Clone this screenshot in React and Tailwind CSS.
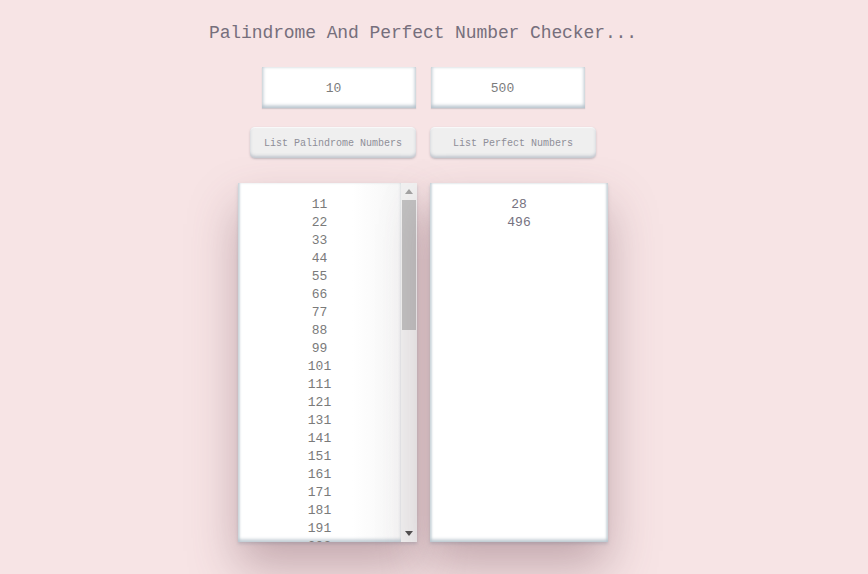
import React from "react";

const palins = [];
for (let i = 10; i <= 500; i++) {
  const s = String(i);
  if (s === s.split("").reverse().join("")) palins.push(i);
}
const perfects = [28, 496];

export default function App() {
  return (
    <div className="min-h-[574px] w-[868px] overflow-hidden bg-[#f7e4e5] font-['Liberation_Mono',monospace]">
      <div className="flex w-[846px] flex-col items-center pt-[21px]">
        <h1 className="h-[24px] text-[18px] leading-[24px] tracking-[-0.1px] text-[#766f7c]">
          Palindrome And Perfect Number Checker...
        </h1>
        <div className="mt-[22px] flex gap-[15px]">
          {["10", "500"].map((v) => (
            <div
              key={v}
              className="flex h-[41px] w-[154px] items-center justify-center bg-white pr-[10px] pt-[2px] text-[13px] text-[#7c7c7c] shadow-[inset_0_-3px_3px_rgba(160,176,190,0.55),inset_2px_0_3px_rgba(175,190,200,0.45),inset_-2px_0_3px_rgba(175,190,200,0.45),0_1px_1px_rgba(150,160,170,0.4)]"
            >
              {v}
            </div>
          ))}
        </div>
        <div className="mt-[19px] flex gap-[14px]">
          {["List Palindrome Numbers", "List Perfect Numbers"].map((t) => (
            <div
              key={t}
              className="flex h-[31px] w-[166px] items-center justify-center rounded-[5px] bg-[#efefef] pt-[2px] text-[10px] text-[#8e8e98] shadow-[inset_0_-2px_3px_rgba(150,160,175,0.5),inset_0_1px_1px_rgba(255,255,255,0.8),0_1px_2px_rgba(140,140,150,0.5)]"
            >
              {t}
            </div>
          ))}
        </div>
        <div className="mt-[25px] flex gap-[13px]">
          <div className="flex h-[359px] w-[179px] shadow-[0_25px_45px_rgba(110,70,85,0.38),0_2px_3px_rgba(150,160,175,0.4)]">
            <div className="w-[163px] overflow-hidden bg-[linear-gradient(to_right,#ffffff_70%,#f6f6f6)] pt-[13px] text-center text-[13px] leading-[18px] text-[#7a7a7a] shadow-[inset_2px_0_2px_rgba(175,190,200,0.5),inset_0_-3px_3px_rgba(160,176,190,0.55)]">
              {palins.map((n) => (
                <div key={n}>{n}</div>
              ))}
            </div>
            <div className="flex w-[16px] flex-col bg-[#f1f1f1]">
              <div className="flex h-[17px] items-center justify-center">
                <svg width="8" height="5" viewBox="0 0 8 5">
                  <path d="M4 0 L8 5 L0 5 Z" fill="#a3a3a3" />
                </svg>
              </div>
              <div className="mx-[1px] h-[130px] bg-[#c1c1c1]" />
              <div className="flex-1" />
              <div className="flex h-[17px] items-center justify-center">
                <svg width="8" height="5" viewBox="0 0 8 5">
                  <path d="M0 0 L8 0 L4 5 Z" fill="#505050" />
                </svg>
              </div>
            </div>
          </div>
          <div className="h-[359px] w-[178px] bg-white pt-[13px] text-center text-[13px] leading-[18px] text-[#76727f] shadow-[inset_2px_0_2px_rgba(175,190,200,0.5),inset_-2px_0_2px_rgba(175,190,200,0.5),inset_0_-3px_3px_rgba(160,176,190,0.55),0_25px_45px_rgba(110,70,85,0.38),0_2px_3px_rgba(150,160,175,0.4)]">
            {perfects.map((n) => (
              <div key={n}>{n}</div>
            ))}
          </div>
        </div>
      </div>
    </div>
  );
}
